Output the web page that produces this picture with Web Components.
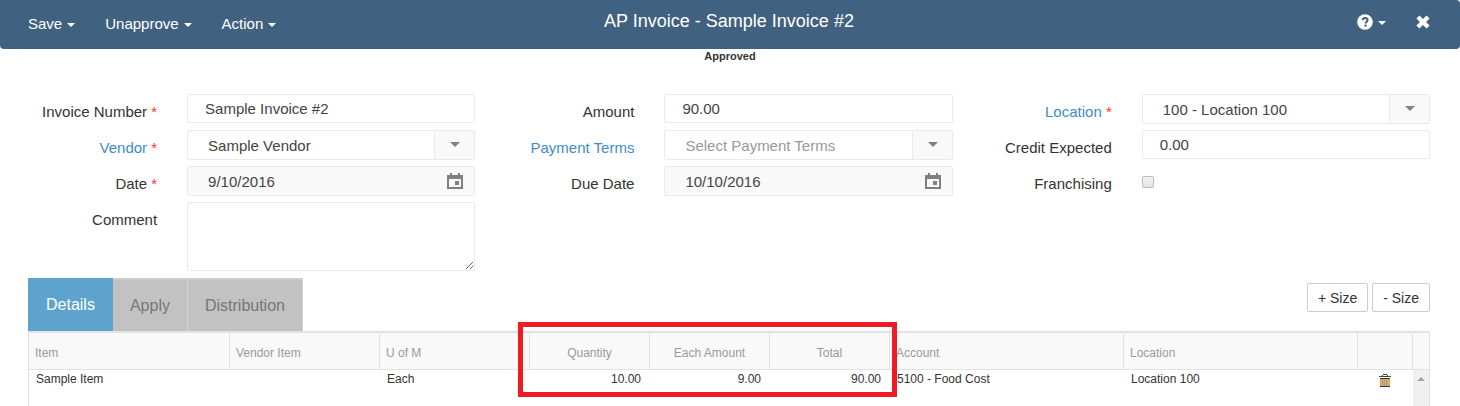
<!DOCTYPE html>
<html lang="en">
<head>
<meta charset="utf-8">
<title>AP Invoice</title>
<style>
  body {
    margin: 0;
    background: #fff;
    color: #333;
    font: 15px/20px "Liberation Sans", Arial, sans-serif;
    --line: #eaeaea;
    --link: #428bca;
  }
</style>
</head>
<body>
<ap-invoice></ap-invoice>

<script>
// Shared by every component, shadow roots don't see outside rules
const RESET = `
  *, *::before, *::after { box-sizing: border-box; }
  button, input, select, textarea { font: inherit; color: inherit; margin: 0; border-radius: 0; }
  button { border: 0; padding: 0; background: none; cursor: pointer; }
  svg { display: block; fill: currentColor; }
`

const ICONS = {
  caret: '<svg width="8" height="4" viewBox="0 0 8 4"><path d="M0 0h8L4 4z"/></svg>',
  arrow: '<svg width="10" height="5" viewBox="0 0 10 5"><path d="M0 0h10L5 5z"/></svg>',
  help: `<svg width="16" height="16" viewBox="0 0 16 16">
    <circle cx="8" cy="8" r="7.8"/>
    <path d="M5.6 6.2C5.8 4.7 6.8 4 8.1 4c1.5 0 2.5.9 2.5 2.1 0 1.8-2 1.8-2 3.3" fill="none" stroke="#416180" stroke-width="2"/>
    <path d="M7.4 10.6h2.3v2H7.4z" fill="#416180"/>
  </svg>`,
  close: '<svg width="14" height="14" viewBox="0 0 13 13"><path d="M3.2.4 6.5 3.7 9.8.4l2.8 2.8-3.3 3.3 3.3 3.3-2.8 2.8-3.3-3.3-3.3 3.3L.4 9.8l3.3-3.3L.4 3.2z"/></svg>',
  calendar: '<svg width="16" height="16" viewBox="0 0 16 16"><path fill-rule="evenodd" d="M3 0h2v2h6V0h2v2h3v14H0V2h3zM2 6v8h12V6z"/><path d="M8 8h4v4H8z"/></svg>',
  trash: `<svg width="12" height="14" viewBox="0 0 12 14">
    <path d="M4 0h4v1h1v1h3v1H0V2h3V1h1zm0 1v1h4V1z" fill-rule="evenodd" fill="#444"/>
    <path d="M1 4h10v9H1z" fill="#3d3328"/>
    <path d="M1 5h2v7H1zM4 5h1v7H4zM6 5h1v7H6zM8 5h1v7H8z" fill="#eda64f"/>
    <path d="M3 5h1v7H3zM5 5h1v7H5zM7 5h1v7H7z" fill="#86a8c4"/>
    <path d="M9 5h2v7H9z" fill="#eda64f"/>
  </svg>`,
  up: '<svg width="8" height="4" viewBox="0 0 8 4"><path d="M4 0l4 4H0z"/></svg>',
}

class Component extends HTMLElement {
  constructor() {
    super()
    this.attachShadow({ mode: 'open' })
  }
  connectedCallback() {
    this.shadowRoot.innerHTML = `<style>${RESET}${this.styles()}</style>${this.template()}`
  }
  styles() { return '' }
  template() { return '<slot></slot>' }
  attr(name) {
    return this.getAttribute(name) || ''
  }
}

class MenuButton extends Component {
  styles() {
    return `
      :host { display: block; }
      button { display: flex; align-items: center; gap: 5px; }
      .caret { padding-top: 2px; }
    `
  }
  template() {
    return `
      <button type="button" aria-haspopup="true" ${this.attr('label') && `aria-label="${this.attr('label')}"`}>
        <slot></slot><span class="caret">${ICONS.caret}</span>
      </button>
    `
  }
}

class TopBar extends Component {
  styles() {
    return `
      :host {
        display: grid;
        grid-template-columns: 1fr auto 1fr;
        align-items: start;
        height: 49px;
        padding: 0 30px 0 28px;
        border-radius: 0 4px 4px 4px;
        background: #416180;
        color: #fff;
      }
      nav, .tools { display: flex; align-items: center; gap: 30px; padding-top: 14px; }
      .tools { justify-content: flex-end; height: 32px; padding-top: 12px; }
      h1 { margin: 0; padding-top: 11px; font-size: 18px; font-weight: normal; line-height: 20px; }
    `
  }
  template() {
    return `
      <nav>
        <menu-button>Save</menu-button>
        <menu-button>Unapprove</menu-button>
        <menu-button>Action</menu-button>
      </nav>
      <h1><slot></slot></h1>
      <div class="tools">
        <menu-button label="Help">${ICONS.help}</menu-button>
        <button type="button" aria-label="Close">${ICONS.close}</button>
      </div>
    `
  }
}

class FormField extends Component {
  styles() {
    return `
      :host {
        display: grid;
        grid-template-columns: 129fr 288fr;
        gap: 30px;
        align-items: start;
        min-height: 30px;
      }
      label { padding-top: 8px; text-align: right; white-space: nowrap; }
      a { color: var(--link); text-decoration: none; }
      i { color: #f33; font-style: normal; }
      .box {
        display: flex;
        position: relative;
        border: 1px solid var(--line);
        border-radius: 2px;
        background: #fff;
        color: #444;
      }
      .box > input, select {
        flex: 1;
        min-width: 0;
        height: 27px;
        padding: 0 17px;
        border: 0;
        background: none;
      }
      .date { background: #f9f9f9; }
      .date > input, select { height: 28px; padding: 0 20px; }
      .date button { padding: 0 11px; color: #808080; }
      select { appearance: none; padding: 2px 50px 0 20px; }
      select.empty { color: #999; }
      .drop {
        position: absolute;
        inset: 0 0 0 auto;
        width: 40px;
        padding: 11px 15px;
        border-left: 1px solid var(--line);
        background: #f9f9f9;
        color: #808080;
        pointer-events: none;
      }
      textarea {
        display: block;
        width: 100%;
        height: 69px;
        padding: 4px 17px;
        border: 1px solid var(--line);
        border-radius: 2px;
        resize: vertical;
      }
      [type=checkbox] {
        appearance: none;
        width: 12px;
        height: 12px;
        margin-top: 10px;
        border: 1px solid #bcbcbc;
        border-radius: 2px;
        background: linear-gradient(#f2f2f2, #e4e4e4);
      }
    `
  }
  control() {
    const value = this.attr('value')
    switch (this.attr('kind')) {
      case 'select':
        return `
          <div class="box">
            <select id="control" class="${value ? '' : 'empty'}"><option>${value || this.attr('placeholder')}</option></select>
            <span class="drop">${ICONS.arrow}</span>
          </div>`
      case 'date':
        return `
          <div class="box date">
            <input id="control" type="text" value="${value}">
            <button type="button" aria-label="Open calendar">${ICONS.calendar}</button>
          </div>`
      case 'textarea':
        return '<textarea id="control"></textarea>'
      case 'checkbox':
        return '<input id="control" type="checkbox">'
      default:
        return `<div class="box"><input id="control" type="text" value="${value}"></div>`
    }
  }
  template() {
    const text = this.attr('label')
    const name = this.hasAttribute('href') ? `<a href="${this.attr('href')}">${text}</a>` : text
    return `
      <label for="control">${name}${this.hasAttribute('required') ? ' <i>*</i>' : ''}</label>
      ${this.control()}
    `
  }
}

class InvoiceForm extends Component {
  styles() {
    return `
      :host {
        display: grid;
        grid-template-columns: repeat(3, minmax(0, 1fr));
        column-gap: 30px;
      }
      .col { display: flex; flex-direction: column; gap: 6px; }
    `
  }
  template() {
    return `
      <div class="col">
        <form-field label="Invoice Number" value="Sample Invoice #2" required></form-field>
        <form-field kind="select" label="Vendor" href="#vendor" value="Sample Vendor" required></form-field>
        <form-field kind="date" label="Date" value="9/10/2016" required></form-field>
        <form-field kind="textarea" label="Comment"></form-field>
      </div>
      <div class="col">
        <form-field label="Amount" value="90.00"></form-field>
        <form-field kind="select" label="Payment Terms" href="#terms" placeholder="Select Payment Terms"></form-field>
        <form-field kind="date" label="Due Date" value="10/10/2016"></form-field>
      </div>
      <div class="col">
        <form-field kind="select" label="Location" href="#location" value="100 - Location 100" required></form-field>
        <form-field label="Credit Expected" value="0.00"></form-field>
        <form-field kind="checkbox" label="Franchising"></form-field>
      </div>
    `
  }
}

class TabStrip extends Component {
  styles() {
    return `
      :host { display: flex; justify-content: space-between; align-items: flex-start; }
      .tabs { display: flex; }
      .tabs button {
        height: 53px;
        padding: 0 17px;
        border-top: 2px solid #ccc;
        border-right: 1px solid #d4d4d4;
        background: #c2c2c2;
        color: #777;
        font-size: 16px;
      }
      .tabs button[aria-selected=true] {
        border: 1px solid #5ea3cd;
        background: #5ea3cd;
        color: #fff;
      }
      .sizes { display: flex; gap: 4px; padding-top: 5px; }
      .sizes button {
        height: 29px;
        padding: 0 10px;
        border: 1px solid #ccc;
        border-radius: 2px;
        font-size: 14px;
      }
    `
  }
  template() {
    return `
      <div class="tabs" role="tablist">
        <button type="button" role="tab" aria-selected="true">Details</button>
        <button type="button" role="tab" aria-selected="false">Apply</button>
        <button type="button" role="tab" aria-selected="false">Distribution</button>
      </div>
      <div class="sizes">
        <button type="button">+ Size</button>
        <button type="button">- Size</button>
      </div>
    `
  }
}

class DetailGrid extends Component {
  styles() {
    return `
      :host {
        display: block;
        position: relative;
        border: solid #e2e2e2;
        border-width: 2px 0 0 1px;
        font-size: 12px;
        line-height: 16px;
      }
      table { width: 100%; table-layout: fixed; border-collapse: separate; border-spacing: 0; }
      .item { width: 201px; }
      .text { width: 150px; }
      .num { width: 120px; }
      .tool { width: 55px; }
      .bar { width: 17px; }
      th {
        height: 37px;
        padding: 4px 6px 0;
        border: solid #e2e2e2;
        border-width: 0 1px 1px 0;
        background: #f9f9f9;
        color: #999;
        font-weight: normal;
        text-align: left;
      }
      th.mid { text-align: center; }
      td { height: 36px; padding: 1px 7px; vertical-align: top; white-space: nowrap; }
      td.right { padding-right: 9px; text-align: right; }
      td.trash { padding: 4px 8px 0 6px; }
      td.trash button { display: block; margin: 0 auto; }
      td.scroll {
        padding: 7px 4px;
        border-right: 1px solid #e2e2e2;
        background: #f0f0f0;
        color: #a3a3a3;
      }
      /* highlight around the three amount columns */
      .mark {
        position: absolute;
        top: -11px;
        left: 489px;
        width: 379px;
        height: 75px;
        border: 5px solid #ed1c24;
        pointer-events: none;
      }
    `
  }
  template() {
    return `
      <table>
        <colgroup>
          <col class="item"><col class="text"><col class="text">
          <col class="num"><col class="num"><col class="num">
          <col><col><col class="tool"><col class="bar">
        </colgroup>
        <thead>
          <tr>
            <th>Item</th><th>Vendor Item</th><th>U of M</th>
            <th class="mid">Quantity</th><th class="mid">Each Amount</th><th class="mid">Total</th>
            <th>Account</th><th>Location</th><th></th><th></th>
          </tr>
        </thead>
        <tbody>
          <tr>
            <td>Sample Item</td><td></td><td>Each</td>
            <td class="right">10.00</td><td class="right">9.00</td><td class="right">90.00</td>
            <td>5100 - Food Cost</td><td>Location 100</td>
            <td class="trash"><button type="button" aria-label="Delete row">${ICONS.trash}</button></td>
            <td class="scroll">${ICONS.up}</td>
          </tr>
        </tbody>
      </table>
      <div class="mark"></div>
    `
  }
}

class ApInvoice extends Component {
  styles() {
    return `
      :host { display: block; }
      .status { margin: 0; font-size: 11px; font-weight: bold; line-height: 15px; text-align: center; }
      main { padding: 30px 30px 0 28px; }
      tab-strip { margin-top: 7px; }
    `
  }
  template() {
    return `
      <top-bar>AP Invoice - Sample Invoice #2</top-bar>
      <p class="status">Approved</p>
      <main>
        <invoice-form></invoice-form>
        <tab-strip></tab-strip>
        <detail-grid></detail-grid>
      </main>
    `
  }
}

customElements.define('menu-button', MenuButton)
customElements.define('top-bar', TopBar)
customElements.define('form-field', FormField)
customElements.define('invoice-form', InvoiceForm)
customElements.define('tab-strip', TabStrip)
customElements.define('detail-grid', DetailGrid)
customElements.define('ap-invoice', ApInvoice)
</script>
</body>
</html>
